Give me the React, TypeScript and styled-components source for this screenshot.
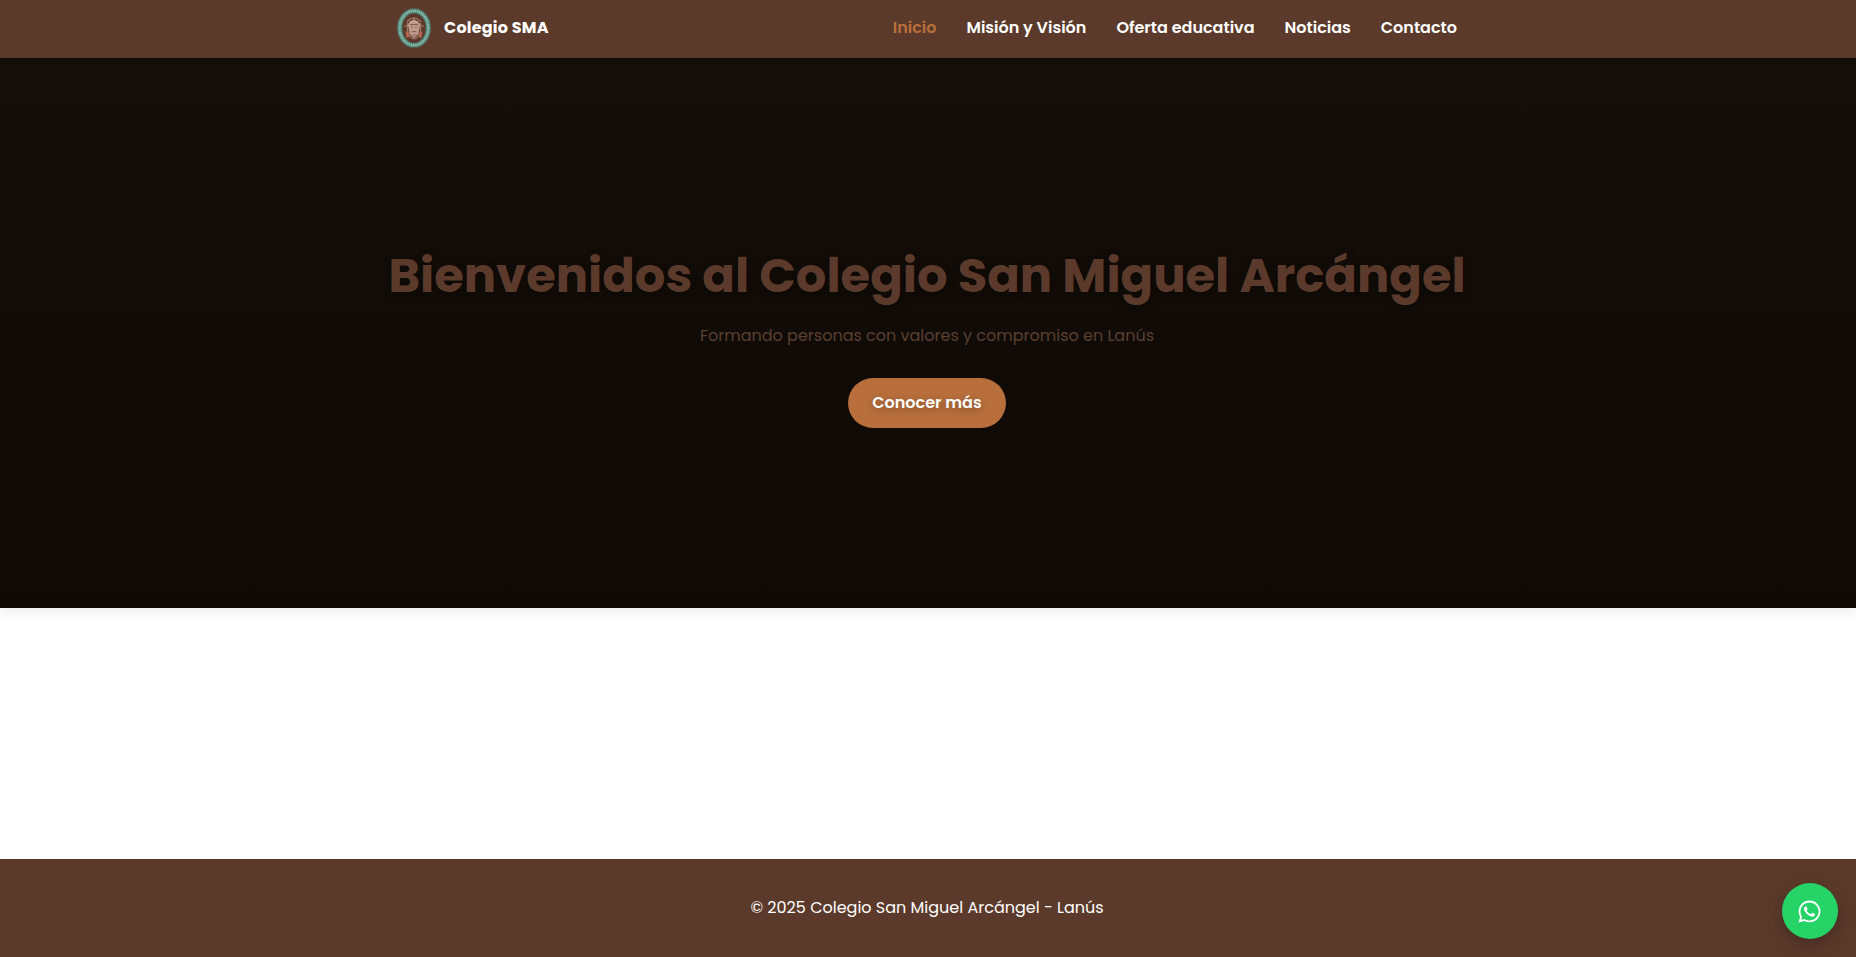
import React from "react";
import styled, { createGlobalStyle } from "styled-components";
import { FaWhatsapp } from "react-icons/fa";

const GlobalStyle = createGlobalStyle`
  * { box-sizing: border-box; }
  body {
    margin: 0;
    background: #fff;
    color: #fff;
    font-family: Poppins, Inter, "Open Sans", sans-serif;
    font-size: 16px;
    line-height: 24px;
  }
  h1, p { margin: 0; }
`;

const Page = styled.div`
  display: flex;
  flex-direction: column;
  height: 957px;
  overflow: hidden;
`;

const Header = styled.header`
  height: 58px;
  flex: none;
  padding-right: 2px;
  background: #5c3a2b;
`;

const HeaderInner = styled.div`
  display: flex;
  align-items: center;
  justify-content: space-between;
  width: 1100px;
  height: 55px;
  margin: 0 auto;
  padding: 0 20px;
`;

const Brand = styled.a`
  display: flex;
  align-items: center;
  gap: 13px;
  font-weight: 700;
  letter-spacing: 0.2px;
  white-space: nowrap;
`;

const BrandName = styled.span`
  padding-top: 1px;
`;

const Nav = styled.nav`
  display: flex;
  gap: 30px;
  padding-top: 1px;
`;

const NavLink = styled.a<{ $active?: boolean }>`
  font-weight: 600;
  color: ${(p) => (p.$active ? "#b86f3c" : "#fff")};
  white-space: nowrap;
`;

const Hero = styled.section`
  display: flex;
  flex-direction: column;
  align-items: center;
  height: 550px;
  flex: none;
  padding: 186px 2px 0 0;
  background: linear-gradient(#130e09, #0e0905);
  box-shadow: 0 4px 12px rgba(0, 0, 0, 0.08);
`;

const Title = styled.h1`
  font-size: 48px;
  line-height: 64px;
  font-weight: 700;
  color: #5c3a2b;
  white-space: nowrap;
  text-shadow: 0 2px 8px rgba(0, 0, 0, 0.3);
`;

const Subtitle = styled.p`
  margin-top: 15px;
  line-height: 26px;
  color: #5a4030;
  white-space: nowrap;
`;

const Button = styled.a`
  display: flex;
  align-items: center;
  justify-content: center;
  width: 158px;
  height: 50px;
  margin-top: 29px;
  border-radius: 25px;
  background: #b86f3c;
  font-weight: 600;
  white-space: nowrap;
  text-shadow: 0 2px 8px rgba(0, 0, 0, 0.3);
`;

const Footer = styled.footer`
  display: flex;
  align-items: center;
  justify-content: center;
  height: 98px;
  flex: none;
  margin-top: auto;
  padding: 0 2px 1px 0;
  background: #5c3a2b;
`;

const WhatsApp = styled.a`
  position: fixed;
  right: 18px;
  bottom: 18px;
  display: flex;
  align-items: center;
  justify-content: center;
  width: 56px;
  height: 56px;
  padding-right: 1px;
  border-radius: 50%;
  background: #25d366;
  box-shadow: 0 6px 18px rgba(0, 0, 0, 0.25);
`;

const Crest = () => (
  <svg width="34" height="40" viewBox="0 0 34 40">
    <ellipse cx="17" cy="20" rx="14.3" ry="17.2" fill="none" stroke="#4f8d7e" strokeWidth="4.8" />
    <ellipse cx="17" cy="20" rx="14.3" ry="17.2" fill="none" stroke="#a3bfb2" strokeWidth="2.2" strokeDasharray="1.2 1" />
    <path d="M7 18h20M10 14q7-8 14 0M10.500 15v8q1 6 6.500 8 5.500-2 6.500-8v-8" fill="none" stroke="#a6796a" strokeWidth="1.2" />
    <path d="M8.500 24q3-3 4 5l-3 1zM25.500 24q-3-3-4 5l3 1z" fill="#ad6650" />
    <path d="M11 16q6-8 12 0l-1.500 10-4.500 4-4.500-4z" fill="#c09a8c" />
    <path d="M13 16.500h8M14 19h2m2 0h2M14.500 24q2.500-1.500 5 0M15.500 27h3" stroke="#76554a" strokeWidth="0.9" fill="none" />
    <path d="M13 13.500h8M17 10v2" stroke="#c9a59a" strokeWidth="1" />
  </svg>
);

const links = [
  { label: "Inicio", active: true },
  { label: "Misión y Visión" },
  { label: "Oferta educativa" },
  { label: "Noticias" },
  { label: "Contacto" },
];

export default function App() {
  return (
    <Page>
      <GlobalStyle />
      <Header>
        <HeaderInner>
          <Brand>
            <Crest />
            <BrandName>Colegio SMA</BrandName>
          </Brand>
          <Nav>
            {links.map((l) => (
              <NavLink key={l.label} $active={l.active}>
                {l.label}
              </NavLink>
            ))}
          </Nav>
        </HeaderInner>
      </Header>
      <Hero>
        <Title>Bienvenidos al Colegio San Miguel Arcángel</Title>
        <Subtitle>Formando personas con valores y compromiso en Lanús</Subtitle>
        <Button>Conocer más</Button>
      </Hero>
      <Footer>
        <p>© 2025 Colegio San Miguel Arcángel - Lanús</p>
      </Footer>
      <WhatsApp>
        <FaWhatsapp size={25} color="#fff" />
      </WhatsApp>
    </Page>
  );
}
